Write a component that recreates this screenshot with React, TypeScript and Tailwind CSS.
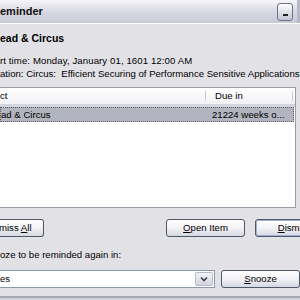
import React from 'react';

const btn =
  'h-[18px] rounded-[3px] border border-[#4e5866] bg-gradient-to-b from-[#ffffff] via-[#f2f2f6] to-[#d6d7e2] text-[9.6px] leading-[16px] text-black flex items-center justify-center shrink-0';

export default function App() {
  return (
    <div className="w-[300px] h-[300px] overflow-hidden bg-[#e2e2e6] font-['Liberation_Sans',Arial,sans-serif] text-[9.6px] text-black flex flex-col">
      {/* title bar */}
      <div className="h-[24px] shrink-0 flex items-center justify-between bg-gradient-to-b from-[#f6f6fa] via-[#d9d9e3] to-[#c9c9d6] border-b border-white">
        <span className="text-[11px] font-bold text-[#111] leading-none">eminder</span>
        <div className="flex items-center h-full pr-[4px] border-r-[3px] border-[#b8b8c6]">
          <div className="w-[16px] h-[18px] rounded-[3px] border border-[#6d7384] bg-gradient-to-b from-[#ffffff] to-[#c4c6d4] flex items-end justify-center pb-[4px]">
            <div className="w-[5px] h-[2px] bg-[#222]" />
          </div>
        </div>
      </div>

      {/* details */}
      <div className="pt-[8px] pr-[2px]">
        <div className="font-bold leading-[12px] text-[10.5px]">ead &amp; Circus</div>
        <div className="mt-[10px] leading-[13px] whitespace-nowrap tracking-[0.1px]">rt time: Monday, January 01, 1601 12:00 AM</div>
        <div className="leading-[13px] whitespace-nowrap">ation: Circus:&nbsp; Efficient Securing of Performance Sensitive Applications</div>
      </div>

      {/* list */}
      <div className="mt-[7px] mr-[4px] h-[121px] shrink-0 bg-white border-t border-r border-b border-[#9c9ca8] flex flex-col">
        <div className="h-[19px] shrink-0 flex items-stretch bg-gradient-to-b from-[#ffffff] to-[#f1f1f4] border-b-[3px] border-[#d4d4dc]">
          <div className="w-[205px] flex items-center leading-none">ct</div>
          <div className="w-[2px] my-[3px] border-l border-[#c8c8d0] bg-white" />
          <div className="flex-1 flex items-center pl-[8px] leading-none">Due in</div>
          <div className="w-[2px] my-[3px] border-l border-[#c8c8d0] bg-white mr-[1px]" />
        </div>
        <div className="h-[15px] shrink-0 flex items-center bg-[#b2b4bf] border border-dotted border-[#5a5a66] mr-[1px]">
          <div className="w-[211px] leading-none">ad &amp; Circus</div>
          <div className="leading-none whitespace-nowrap">21224 weeks o...</div>
        </div>
        <div className="flex-1" />
      </div>

      {/* buttons */}
      <div className="mt-[11px] flex items-center">
        <div className={`${btn} w-[45px] -ml-[1px] border-l-0 rounded-l-none justify-start`}>
          <span>miss <span className="underline">A</span>ll</span>
        </div>
        <div className={`${btn} w-[79px] ml-[122px]`}>
          <span><span className="underline">O</span>pen Item</span>
        </div>
        <div className={`${btn} w-[79px] ml-[10px] ring-1 ring-inset ring-[#9fb0d4]`}>
          <span><span className="underline">D</span>ismiss</span>
        </div>
      </div>

      {/* snooze */}
      <div className="mt-[12px] leading-[12px] whitespace-nowrap">oze to be reminded again in:</div>
      <div className="mt-[9px] flex items-center">
        <div className="w-[264px] h-[18px] bg-white border-t border-r border-b border-[#8e98ac] flex items-center justify-between pr-[1px]">
          <span className="leading-none">es</span>
          <div className="w-[18px] h-[14px] rounded-[2px] border border-[#b6b9c6] bg-gradient-to-b from-[#f4f4f8] to-[#d2d4de] flex items-center justify-center">
            <svg width="8" height="6" viewBox="0 0 8 6">
              <path d="M1 1.5 L4 4.5 L7 1.5" fill="none" stroke="#3a3f4c" strokeWidth="1.6" />
            </svg>
          </div>
        </div>
        <div className={`${btn} w-[79px] ml-[6px]`}>
          <span><span className="underline">S</span>nooze</span>
        </div>
      </div>

      <div className="mt-auto h-[4px] shrink-0 border-t-2 border-[#a6a6b0] bg-[#d0d0d8]" />
    </div>
  );
}
